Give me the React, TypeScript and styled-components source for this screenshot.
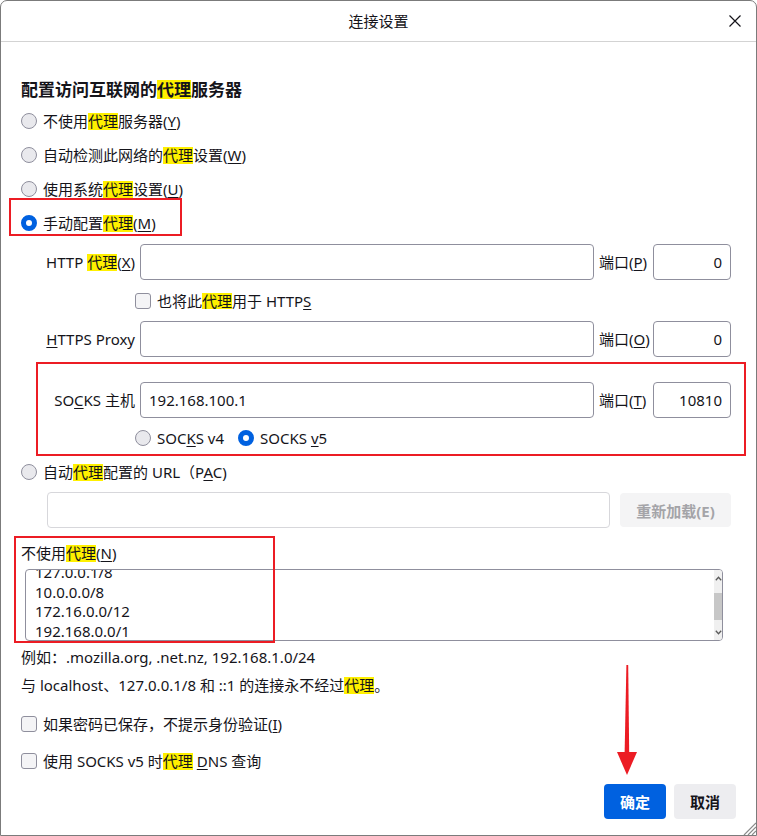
import React from 'react';
import styled, { createGlobalStyle } from 'styled-components';

const GlobalStyle = createGlobalStyle`
  html, body {
    margin: 0;
    padding: 0;
    background: #ffffff;
  }
  body {
    font-family: "Noto Sans", "Noto Sans CJK SC", sans-serif;
    color: #15141a;
  }
  * {
    box-sizing: border-box;
  }
`;

const Dialog = styled.div`
  position: relative;
  width: 757px;
  height: 836px;
  border: 1px solid #7b7b7b;
  border-radius: 7px 7px 0 0;
  background: #ffffff;
  display: flex;
  flex-direction: column;
  overflow: hidden;
`;

const TitleBar = styled.header`
  height: 41px;
  border-bottom: 1px solid #d3d3d3;
  display: grid;
  grid-template-columns: 1fr auto 1fr;
  align-items: center;
`;

const Title = styled.h1`
  grid-column: 2;
  margin: 0;
  font-size: 15px;
  font-weight: 400;
  line-height: 20px;
`;

const CloseButton = styled.button`
  grid-column: 3;
  justify-self: end;
  width: 24px;
  height: 24px;
  margin-right: 9px;
  padding: 0;
  border: 0;
  background: transparent;
  display: flex;
  align-items: center;
  justify-content: center;
`;

const Body = styled.main`
  flex: 1;
  display: flex;
  flex-direction: column;
  padding: 36px 20px 16px 20px;
`;

const Heading = styled.h2`
  margin: 0 0 2px;
  font-size: 17px;
  font-weight: 700;
  line-height: 24px;
`;

const OptionRow = styled.div<{ $top?: number; $height?: number }>`
  position: relative;
  display: flex;
  align-items: center;
  gap: 6px;
  height: ${p => p.$height ?? 34}px;
  margin-top: ${p => p.$top ?? 0}px;
  font-size: 15px;
  line-height: 20px;
  white-space: nowrap;
`;

const Radio = styled.span<{ $checked?: boolean }>`
  flex: none;
  width: 16px;
  height: 16px;
  border-radius: 50%;
  border: ${p => (p.$checked ? '5px solid #0061e0' : '1px solid #8f8f9d')};
  background: ${p => (p.$checked ? '#ffffff' : '#e9e9ed')};
`;

const Checkbox = styled.span`
  flex: none;
  width: 16px;
  height: 16px;
  border: 1px solid #8f8f9d;
  border-radius: 3px;
  background: #f4f4f6;
`;

const Mark = styled.span`
  display: inline-block;
  background: #fff000;
  line-height: 1.13em;
`;

const Key = styled.u`
  text-underline-offset: 2px;
  text-decoration-thickness: 1px;
`;

const Callout = styled.span<{ $top: number; $left: number; $width: number; $height: number }>`
  position: absolute;
  top: ${p => p.$top}px;
  left: ${p => p.$left}px;
  width: ${p => p.$width}px;
  height: ${p => p.$height}px;
  border: 2px solid #ec1c24;
  pointer-events: none;
`;

const FieldGrid = styled.div<{ $top: number }>`
  position: relative;
  display: grid;
  grid-template-columns: 94px 1fr 49px 78px;
  column-gap: 5px;
  align-items: center;
  margin: ${p => p.$top}px 5px 0 20px;
  font-size: 15px;
  line-height: 20px;
`;

const FieldLabel = styled.span`
  justify-self: end;
  white-space: nowrap;
`;

const PortLabel = styled.span`
  white-space: nowrap;
`;

const Input = styled.input<{ $align?: 'left' | 'right'; $disabled?: boolean }>`
  width: 100%;
  height: 36px;
  margin: 0;
  padding: 0 8px;
  border: 1px solid ${p => (p.$disabled ? '#d7d7db' : '#8f8f9d')};
  border-radius: 4px;
  background: #ffffff;
  font-family: inherit;
  font-size: 15px;
  color: #15141a;
  text-align: ${p => p.$align ?? 'left'};
  outline: none;
`;

const SubOptions = styled.div<{ $height: number }>`
  grid-column: 2 / span 3;
  margin-left: -5px;
  height: ${p => p.$height}px;
  display: flex;
  align-items: center;
  gap: 14px;
`;

const SubOption = styled.span`
  display: flex;
  align-items: center;
  gap: 6px;
  white-space: nowrap;
`;

const PacRow = styled.div`
  display: flex;
  align-items: center;
  gap: 10px;
  margin: 3px 5px 0 26px;
`;

const ReloadButton = styled.button`
  flex: none;
  width: 111px;
  height: 34px;
  border: 0;
  border-radius: 4px;
  background: #f4f4f5;
  color: #a4a4a8;
  font-family: inherit;
  font-size: 15px;
  font-weight: 700;
`;

const NoProxyBlock = styled.div`
  position: relative;
  margin-top: 15px;
`;

const SectionLabel = styled.div`
  font-size: 15px;
  line-height: 20px;
`;

const ListBox = styled.div`
  margin: 6px 13px 0 4px;
  height: 72px;
  border: 1px solid #8f8f9d;
  border-radius: 4px;
  display: flex;
  overflow: hidden;
`;

const ListLines = styled.ul`
  flex: 1;
  margin: -7px 0 0;
  padding: 0 0 0 9px;
  list-style: none;
  font-size: 15px;
  line-height: 19.5px;
`;

const ScrollTrack = styled.div`
  flex: none;
  width: 8px;
  background: #f0f0f0;
  display: flex;
  flex-direction: column;
`;

const ScrollArrow = styled.div<{ $height: number }>`
  height: ${p => p.$height}px;
  display: flex;
  align-items: center;
  justify-content: center;
`;

const ScrollThumb = styled.div`
  height: 27px;
  background: #c7c7c7;
`;

const Hint = styled.p<{ $top: number }>`
  margin: ${p => p.$top}px 0 0;
  font-size: 15px;
  line-height: 20px;
  white-space: nowrap;
`;

const ButtonBar = styled.footer`
  margin-top: auto;
  display: flex;
  justify-content: flex-end;
  gap: 8px;
`;

const DialogButton = styled.button<{ $primary?: boolean }>`
  width: 62px;
  height: 35px;
  border: 0;
  border-radius: 4px;
  background: ${p => (p.$primary ? '#0061e0' : '#ededf0')};
  color: ${p => (p.$primary ? '#ffffff' : '#15141a')};
  font-family: inherit;
  font-size: 15px;
  font-weight: 700;
`;

const ArrowMark = styled.svg`
  position: absolute;
  left: 613px;
  top: 662px;
  pointer-events: none;
`;

const ResizeGrip = styled.svg`
  position: absolute;
  right: 0;
  bottom: 0;
`;

const Chevron = ({ up }: { up?: boolean }) => (
  <svg width="7" height="5" viewBox="0 0 7 5">
    <path
      d={up ? 'M0.8 4.2 L3.5 1.2 L6.2 4.2' : 'M0.8 0.8 L3.5 3.8 L6.2 0.8'}
      fill="none"
      stroke="#5b5b5b"
      strokeWidth="1.3"
    />
  </svg>
);

export default function App() {
  return (
    <Dialog>
      <GlobalStyle />
      <TitleBar>
        <Title>连接设置</Title>
        <CloseButton aria-label="关闭">
          <svg width="12" height="12" viewBox="0 0 12 12">
            <path d="M0.5 0.5 L11.5 11.5 M11.5 0.5 L0.5 11.5" stroke="#15141a" strokeWidth="1.2" />
          </svg>
        </CloseButton>
      </TitleBar>

      <Body>
        <Heading>
          配置访问互联网的<Mark>代理</Mark>服务器
        </Heading>

        <OptionRow>
          <Radio />
          <span>
            不使用<Mark>代理</Mark>服务器(<Key>Y</Key>)
          </span>
        </OptionRow>
        <OptionRow>
          <Radio />
          <span>
            自动检测此网络的<Mark>代理</Mark>设置(<Key>W</Key>)
          </span>
        </OptionRow>
        <OptionRow>
          <Radio />
          <span>
            使用系统<Mark>代理</Mark>设置(<Key>U</Key>)
          </span>
        </OptionRow>
        <OptionRow>
          <Radio $checked />
          <span>
            手动配置<Mark>代理</Mark>(<Key>M</Key>)
          </span>
          <Callout $top={-8} $left={-12} $width={173} $height={38} />
        </OptionRow>

        <FieldGrid $top={4}>
          <FieldLabel>
            HTTP <Mark>代理</Mark>(<Key>X</Key>)
          </FieldLabel>
          <Input defaultValue="" />
          <PortLabel>
            端口(<Key>P</Key>)
          </PortLabel>
          <Input $align="right" defaultValue="0" />

          <SubOptions $height={41}>
            <SubOption>
              <Checkbox />
              <span>
                也将此<Mark>代理</Mark>用于 HTTP<Key>S</Key>
              </span>
            </SubOption>
          </SubOptions>

          <FieldLabel>
            <Key>H</Key>TTPS Proxy
          </FieldLabel>
          <Input defaultValue="" />
          <PortLabel>
            端口(<Key>O</Key>)
          </PortLabel>
          <Input $align="right" defaultValue="0" />
        </FieldGrid>

        <FieldGrid $top={25}>
          <FieldLabel>
            SO<Key>C</Key>KS 主机
          </FieldLabel>
          <Input defaultValue="192.168.100.1" />
          <PortLabel>
            端口(<Key>T</Key>)
          </PortLabel>
          <Input $align="right" defaultValue="10810" />

          <SubOptions $height={30} style={{ alignItems: 'flex-end' }}>
            <SubOption>
              <Radio />
              <span>
                SOC<Key>K</Key>S v4
              </span>
            </SubOption>
            <SubOption>
              <Radio $checked />
              <span>
                SOCKS <Key>v</Key>5
              </span>
            </SubOption>
          </SubOptions>
          <Callout $top={-20} $left={-5} $width={710} $height={94} />
        </FieldGrid>

        <OptionRow $top={7}>
          <Radio />
          <span>
            自动<Mark>代理</Mark>配置的 URL（P<Key>A</Key>C)
          </span>
        </OptionRow>
        <PacRow>
          <Input $disabled defaultValue="" />
          <ReloadButton disabled>重新加载(E)</ReloadButton>
        </PacRow>

        <NoProxyBlock>
          <SectionLabel>
            不使用<Mark>代理</Mark>(<Key>N</Key>)
          </SectionLabel>
          <ListBox>
            <ListLines>
              <li>127.0.0.1/8</li>
              <li>10.0.0.0/8</li>
              <li>172.16.0.0/12</li>
              <li>192.168.0.0/1</li>
            </ListLines>
            <ScrollTrack>
              <ScrollArrow $height={16}>
                <Chevron up />
              </ScrollArrow>
              <div style={{ height: 7 }} />
              <ScrollThumb />
              <div style={{ flex: 1 }} />
              <ScrollArrow $height={16}>
                <Chevron />
              </ScrollArrow>
            </ScrollTrack>
          </ListBox>
          <Callout $top={-7} $left={-7} $width={261} $height={107} />
        </NoProxyBlock>

        <Hint $top={6}>例如：.mozilla.org, .net.nz, 192.168.1.0/24</Hint>
        <Hint $top={8}>
          与 localhost、127.0.0.1/8 和 ::1 的连接永不经过<Mark>代理</Mark>。
        </Hint>

        <OptionRow $top={12}>
          <Checkbox />
          <span>
            如果密码已保存，不提示身份验证(<Key>I</Key>)
          </span>
        </OptionRow>
        <OptionRow $top={3}>
          <Checkbox />
          <span>
            使用 SOCKS v5 时<Mark>代理</Mark> <Key>D</Key>NS 查询
          </span>
        </OptionRow>

        <ButtonBar>
          <DialogButton $primary>确定</DialogButton>
          <DialogButton>取消</DialogButton>
        </ButtonBar>
      </Body>

      <ArrowMark width="26" height="114" viewBox="0 0 26 114">
        <path d="M12.4 2 L14.2 2 L15.2 91 L10.6 91 Z" fill="#ec1c24" />
        <path d="M3 89 L23 89 L13 112 Z" fill="#ec1c24" />
      </ArrowMark>

      <ResizeGrip width="16" height="16" viewBox="0 0 16 16">
        <path d="M16 4 L4 16 M16 8 L8 16 M16 12 L12 16" stroke="#8a8a8a" strokeWidth="1.2" />
      </ResizeGrip>
    </Dialog>
  );
}
